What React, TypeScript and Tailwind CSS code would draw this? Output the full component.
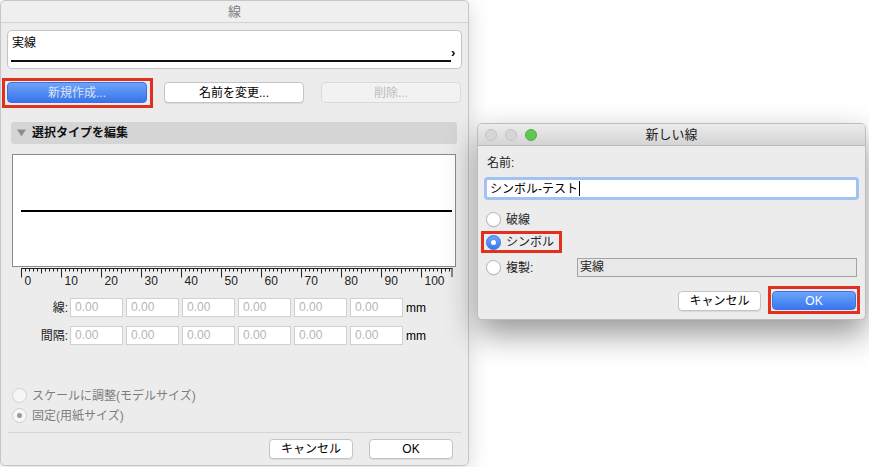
import React from 'react';

const FONT = "font-['Liberation_Sans','Noto_Sans_CJK_JP',sans-serif]";

function Radio({ state }: { state: 'off' | 'on' | 'disabled' | 'disabledOn' }) {
    if (state === 'on') {
        return (
            <span className="w-[15px] h-[15px] rounded-full bg-gradient-to-b from-[#6aa6fb] to-[#3a78ee] border border-[#3f74e0] flex items-center justify-center shrink-0">
                <span className="w-[5px] h-[5px] rounded-full bg-white" />
            </span>
        );
    }
    if (state === 'disabledOn') {
        return (
            <span className="w-[15px] h-[15px] rounded-full bg-[#f6f6f6] border border-[#cfcfcf] flex items-center justify-center shrink-0">
                <span className="w-[5px] h-[5px] rounded-full bg-[#9a9a9a]" />
            </span>
        );
    }
    if (state === 'disabled') {
        return <span className="w-[15px] h-[15px] rounded-full bg-[#f6f6f6] border border-[#d2d2d2] shrink-0" />;
    }
    return <span className="w-[15px] h-[15px] rounded-full bg-white border border-[#b3b3b3] shadow-[0_1px_0_rgba(0,0,0,0.06)] shrink-0" />;
}

function WhiteButton({ children, className = '' }: { children: React.ReactNode; className?: string }) {
    return (
        <button className={`h-[20px] rounded-[4px] border border-[#c4c4c4] bg-white text-[12px] leading-none text-black shadow-[0_1px_0_rgba(0,0,0,0.07)] ${className}`}>
            {children}
        </button>
    );
}

function Ruler() {
    const ticks = [];
    for (let i = 0; i <= 107; i++) {
        const x = 14.5 + i * 4;
        const len = i % 10 === 0 ? 9 : i % 5 === 0 ? 5 : 3;
        ticks.push(<line key={i} x1={x} y1={1.5} x2={x} y2={1.5 + len} stroke="#222" strokeWidth={1} />);
    }
    const labels = [];
    for (let i = 0; i <= 10; i++) {
        labels.push(
            <text key={i} x={17.5 + i * 40} y={17.5} fontSize={12} fill="#222" fontFamily="Liberation Sans, sans-serif">
                {i * 10}
            </text>
        );
    }
    return (
        <svg width="455" height="20" className="block">
            <line x1={14} y1={1.5} x2={445.5} y2={1.5} stroke="#222" strokeWidth={1} />
            <line x1={445} y1={1} x2={445} y2={10} stroke="#222" strokeWidth={1} />
            {ticks}
            {labels}
        </svg>
    );
}

function ValueRow({ label }: { label: string }) {
    return (
        <div className="flex items-center h-[19px]">
            <span className="w-[61px] text-right text-[12px] text-[#222]">{label}</span>
            <div className="flex gap-[3px] ml-[2px]">
                {[0, 1, 2, 3, 4, 5].map((i) => (
                    <div key={i} className="w-[53px] h-[19px] border border-[#d0d0d0] bg-white text-[12px] leading-[17px] text-[#b5b5b5] pl-[4px]">
                        0.00
                    </div>
                ))}
            </div>
            <span className="ml-[3px] text-[12px] text-black">mm</span>
        </div>
    );
}

function LineWindow() {
    return (
        <div className="w-[469px] h-[466px] shrink-0 rounded-[5px] border border-[#c6c6c6] bg-[#ececec] flex flex-col shadow-[0_4px_22px_rgba(0,0,0,0.16)]">
            <div className="h-[22px] shrink-0 border-b border-[#d3d3d3] bg-[#efefef] rounded-t-[5px] flex items-center justify-center text-[13px] text-[#7b7b7b]">
                線
            </div>
            <div className="px-[6px] flex flex-col">
                <div className="mt-[7px] h-[39px] rounded-[5px] border border-[#c4c4c4] bg-white flex items-center">
                    <div className="flex-1 pl-[3px] pt-[4px] self-start">
                        <div className="h-[16px] leading-[16px] text-[12px] text-black pl-[1px]">実線</div>
                        <div className="mt-[9px] h-[1.5px] w-[440px] bg-[#111]" />
                    </div>
                    <span className="w-[10px] text-[13px] font-bold text-black leading-none mr-[2px] mt-[5px]">›</span>
                </div>

                <div className="mt-[13px] flex gap-[17px]">
                    <div className="-ml-[5px] -mr-[6px] -mt-[4px] -mb-[5px] border-[3px] border-[#e1301d] pl-[2px] pr-[3px] pt-[1px] pb-[2px]">
                        <button className="block w-[140px] h-[21px] rounded-[4px] border border-[#3c70e2] bg-gradient-to-b from-[#6da3fa] to-[#3a73ea] text-[12px] leading-none text-[#dbe5fa]">
                            新規作成...
                        </button>
                    </div>
                    <WhiteButton className="w-[140px] h-[21px]">名前を変更...</WhiteButton>
                    <button className="w-[140px] h-[21px] rounded-[4px] border border-[#dadada] bg-[#f2f2f2] text-[12px] leading-none text-[#bdbdbd]">
                        削除...
                    </button>
                </div>

                <div className="mt-[19px] ml-[4px] w-[446px] h-[22px] rounded-[3px] bg-[#d5d5d5] flex items-center pl-[6px]">
                    <svg width="9" height="8" viewBox="0 0 9 8" className="block">
                        <path d="M0 0.5 H9 L4.5 7.5 Z" fill="#8e8e8e" />
                    </svg>
                    <span className="ml-[6px] text-[12px] font-bold text-[#111]">選択タイプを編集</span>
                </div>

                <div className="mt-[10px] ml-[5px] w-[444px] h-[113px] border border-[#8a8a8a] bg-white">
                    <div className="mt-[55px] ml-[8px] w-[431px] h-[1.5px] bg-black" />
                </div>

                <Ruler />

                <div className="mt-[11px] flex flex-col gap-[9px]">
                    <ValueRow label="線:" />
                    <ValueRow label="間隔:" />
                </div>

                <div className="mt-[43px] ml-[5px] flex flex-col gap-[5px] text-[12px] text-[#7d7d7d]">
                    <div className="flex items-center h-[15px]">
                        <Radio state="disabled" />
                        <span className="ml-[5px]">スケールに調整(モデルサイズ)</span>
                    </div>
                    <div className="flex items-center h-[15px]">
                        <Radio state="disabledOn" />
                        <span className="ml-[5px]">固定(用紙サイズ)</span>
                    </div>
                </div>

                <div className="mt-[9px] mx-[1px] h-px bg-[#d5d5d5]" />

                <div className="mt-[6px] flex justify-end gap-[16px] pr-[9px]">
                    <WhiteButton className="w-[84px]">キャンセル</WhiteButton>
                    <WhiteButton className="w-[84px]">OK</WhiteButton>
                </div>
            </div>
        </div>
    );
}

function NewLineDialog() {
    return (
        <div className="relative z-10 w-[389px] h-[197px] rounded-[5px] border border-[#bcbcbc] bg-[#ececec] overflow-hidden shadow-[0_14px_32px_rgba(0,0,0,0.42)]">
            <div className="h-[22px] border-b border-[#b9b9b9] bg-gradient-to-b from-[#ececec] to-[#d4d4d4] grid grid-cols-[1fr_auto_1fr] items-center">
                <div className="flex gap-[8px] pl-[7px]">
                    <span className="w-[12px] h-[12px] rounded-full bg-[#d6d6d6] border border-[#c2c2c2]" />
                    <span className="w-[12px] h-[12px] rounded-full bg-[#d6d6d6] border border-[#c2c2c2]" />
                    <span className="w-[12px] h-[12px] rounded-full bg-[#5fc553] border border-[#4fae43]" />
                </div>
                <span className="text-[13px] text-[#222] px-1">新しい線</span>
                <div />
            </div>
            <div className="px-[6px] flex flex-col">
                <div className="mt-[9px] pl-[3px] h-[16px] leading-[16px] text-[12px] text-[#222]">名前:</div>
                <div className="mt-[6px] h-[23px] rounded-[4px] border-[3px] border-[#a3c1f2] bg-white flex items-center pl-[3px]">
                    <span className="text-[12px] text-black">シンボル-テスト</span>
                    <span className="ml-[1px] w-px h-[15px] bg-black" />
                </div>

                <div className="mt-[12px] ml-[2px] flex items-center h-[15px] text-[12px] text-[#222]">
                    <Radio state="off" />
                    <span className="ml-[5px]">破線</span>
                </div>
                <div className="mt-[4px] -ml-[3px] w-[81px] h-[22px] border-[3px] border-[#e1301d] pl-[2px] flex items-center text-[12px] text-[#222]">
                    <Radio state="on" />
                    <span className="ml-[5px]">シンボル</span>
                </div>
                <div className="mt-[5px] ml-[2px] flex items-center h-[19px] text-[12px] text-[#222]">
                    <Radio state="off" />
                    <span className="ml-[5px] w-[71px]">複製:</span>
                    <div className="w-[280px] h-[19px] border border-[#a3a3a3] bg-[#e8e8e8] pl-[2px] leading-[17px] text-[12px] text-[#222]">
                        実線
                    </div>
                </div>

                <div className="mt-[9px] flex items-start justify-end gap-[7px] -mr-[1px]">
                    <WhiteButton className="mt-[5px] w-[83px] h-[19px]">キャンセル</WhiteButton>
                    <div className="border-[3px] border-[#e1301d] pt-[2px] px-[1px] pb-[1px]">
                        <button className="block w-[84px] h-[19px] rounded-[4px] border border-[#3b72e6] bg-gradient-to-b from-[#6ba5fb] to-[#3a77ef] text-[12px] leading-none text-white">
                            OK
                        </button>
                    </div>
                </div>
            </div>
        </div>
    );
}

export default function App() {
    return (
        <div className={`w-[869px] h-[467px] bg-white overflow-hidden flex ${FONT}`}>
            <LineWindow />
            <div className="pt-[123px] ml-[8px]">
                <NewLineDialog />
            </div>
        </div>
    );
}
